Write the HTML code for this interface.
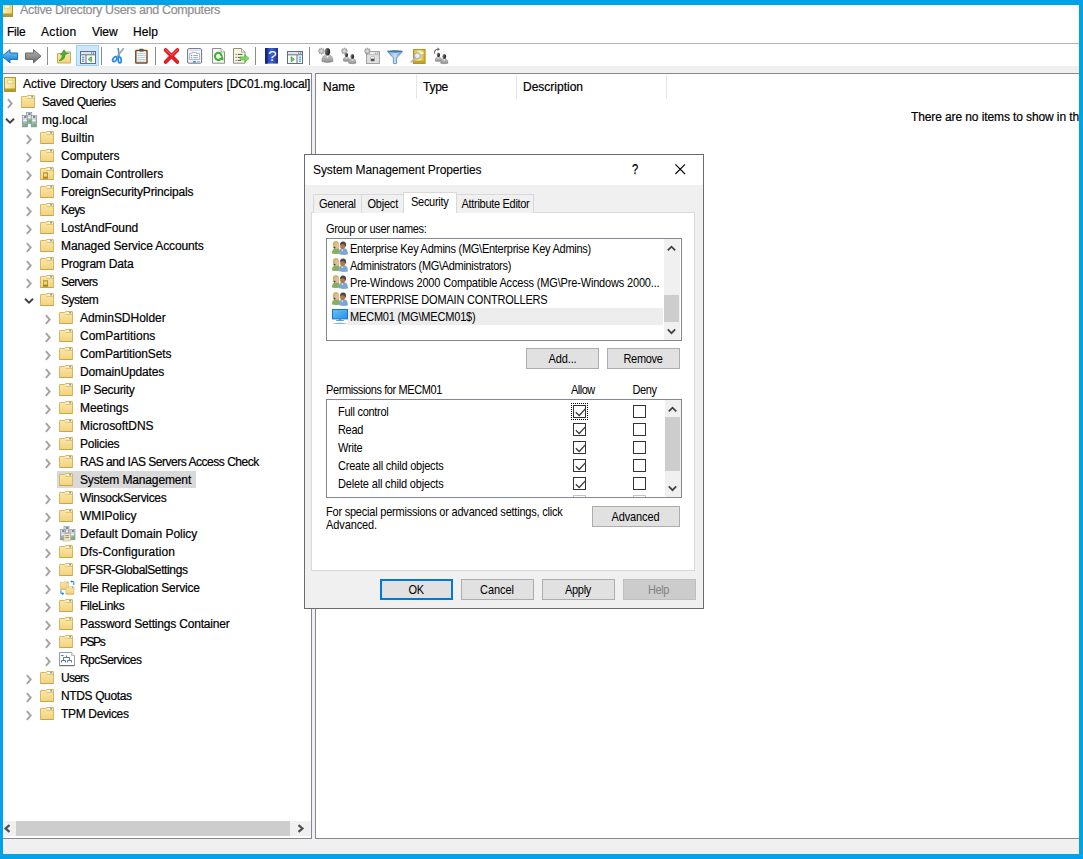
<!DOCTYPE html>
<html><head><meta charset="utf-8"><title>Active Directory Users and Computers</title>
<style>
html,body{margin:0;padding:0}
body{width:1083px;height:859px;overflow:hidden;background:#00a2e8;font-family:'Liberation Sans', sans-serif;}
#win{position:absolute;left:0;top:0;width:1083px;height:859px;overflow:hidden}
#win:before{content:"";position:absolute;left:3px;top:5px;width:1076px;height:849px;background:#fff}
.t{position:absolute;white-space:pre;font-family:'Liberation Sans', sans-serif}
.s{-webkit-text-stroke:0.2px currentColor}
.hl{position:absolute;height:1px}
.vl{position:absolute;width:1px}
.pane{position:absolute;box-sizing:border-box;background:#fff;border:1px solid #828790}
.btn{position:absolute;box-sizing:border-box;background:#e1e1e1;border:1px solid #adadad}
.cb{position:absolute;box-sizing:border-box;width:13px;height:13px;border:1px solid #333;background:#fff}
svg{position:absolute;overflow:visible}
</style></head>
<body>
<svg width="0" height="0" style="position:absolute"><defs>
<linearGradient id="gF" x1="0" y1="0" x2="0" y2="1"><stop offset="0" stop-color="#fbe9ad"/><stop offset="1" stop-color="#f2d27c"/></linearGradient>
<linearGradient id="gB" x1="0" y1="0" x2="1" y2="0"><stop offset="0" stop-color="#fbf6c8"/><stop offset="1" stop-color="#e8d676"/></linearGradient>
<linearGradient id="gS" x1="0" y1="0" x2="0" y2="1"><stop offset="0" stop-color="#d3dbe1"/><stop offset="1" stop-color="#8e9aa6"/></linearGradient>
<linearGradient id="gM" x1="0" y1="0" x2="1" y2="1"><stop offset="0" stop-color="#6cc2f7"/><stop offset="1" stop-color="#2391e6"/></linearGradient>
<linearGradient id="gBlue" x1="0" y1="0" x2="0" y2="1"><stop offset="0" stop-color="#7ec8f5"/><stop offset="1" stop-color="#1079d0"/></linearGradient>
<linearGradient id="gGray" x1="0" y1="0" x2="0" y2="1"><stop offset="0" stop-color="#b5b5b5"/><stop offset="1" stop-color="#6d6d6d"/></linearGradient>
<linearGradient id="gHelp" x1="0" y1="0" x2="1" y2="0"><stop offset="0" stop-color="#1a2f8f"/><stop offset="0.5" stop-color="#3d62d8"/><stop offset="1" stop-color="#1a2f8f"/></linearGradient>
<linearGradient id="gPerson" x1="0" y1="0" x2="0" y2="1"><stop offset="0" stop-color="#5a5a5a"/><stop offset="1" stop-color="#b8b8b8"/></linearGradient>
<linearGradient id="gFun" x1="0" y1="0" x2="1" y2="0"><stop offset="0" stop-color="#6ba5d6"/><stop offset="0.5" stop-color="#c4def2"/><stop offset="1" stop-color="#5b94c8"/></linearGradient>
<linearGradient id="gGold" x1="0" y1="0" x2="1" y2="0"><stop offset="0" stop-color="#d6b43a"/><stop offset="0.5" stop-color="#f6e693"/><stop offset="1" stop-color="#c9a52c"/></linearGradient>
<linearGradient id="gBody" x1="0" y1="0" x2="0" y2="1"><stop offset="0" stop-color="#c9c9c9"/><stop offset="1" stop-color="#8c8c8c"/></linearGradient>
<linearGradient id="gHead" x1="0" y1="0" x2="1" y2="0.3"><stop offset="0" stop-color="#a0a0a0"/><stop offset="0.65" stop-color="#3c3c3c"/><stop offset="1" stop-color="#2a2a2a"/></linearGradient>
</defs></svg>
<div id="win">
<svg style="left:1px;top:2px" width="13" height="15" viewBox="0 0 13 15"><rect x="0.5" y="0.5" width="11" height="14" fill="url(#gB)" stroke="#b3922d"/><rect x="1" y="11.5" width="10" height="2.5" fill="#b39a31"/><rect x="3.2" y="3.2" width="5.6" height="3" fill="#fffbd8" stroke="#dcc66a" stroke-width="0.8"/></svg>
<span class="t s" style="left:20px;top:2.25px;font-size:12.5px;line-height:16.5px;letter-spacing:-0.349px;color:#8f8f8f;">Active Directory Users and Computers</span>
<span class="t s" style="left:7px;top:23.5px;font-size:12px;line-height:16px;letter-spacing:-0.211px;color:#000;">File</span>
<span class="t s" style="left:41px;top:23.5px;font-size:12px;line-height:16px;letter-spacing:0.357px;color:#000;">Action</span>
<span class="t s" style="left:92px;top:23.5px;font-size:12px;line-height:16px;letter-spacing:-0.074px;color:#000;">View</span>
<span class="t s" style="left:133px;top:23.5px;font-size:12px;line-height:16px;letter-spacing:0.078px;color:#000;">Help</span>
<div class="hl" style="left:3px;top:43px;width:1076px;background:#b2b2b2"></div>
<div id="tb"></div>
<div class="vl" style="left:47px;top:47px;height:18px;background:#8d8d8d"></div>
<div class="vl" style="left:101px;top:47px;height:18px;background:#8d8d8d"></div>
<div class="vl" style="left:155px;top:47px;height:18px;background:#8d8d8d"></div>
<div class="vl" style="left:255px;top:47px;height:18px;background:#8d8d8d"></div>
<div class="vl" style="left:309px;top:47px;height:18px;background:#8d8d8d"></div>
<svg style="left:3px;top:49px" width="16" height="15" viewBox="0 0 16 15"><path d="M-1 7.2 L7 0.6 V4 H14.6 V10.4 H7 V13.8 Z" fill="url(#gBlue)" stroke="#0b62b3" stroke-width="0.9"/></svg>
<svg style="left:25px;top:49px" width="17" height="15" viewBox="0 0 17 15"><path d="M16 7.2 L8.6 0.6 V4 H0.6 V10.4 H8.6 V13.8 Z" fill="url(#gGray)" stroke="#5a5a5a" stroke-width="0.9"/></svg>
<svg style="left:57px;top:49px" width="15" height="15" viewBox="0 0 15 15"><path d="M0.5 4.5 H8 L9.5 3 H13.5 V14 H0.5 Z" fill="url(#gF)" stroke="#cfa94f"/><rect x="9.8" y="3.8" width="2.6" height="1" fill="#4a90e2"/><path d="M2 11.6 Q5.2 10.2 5.6 5.6 L3.6 6 L7 0.8 L10.2 5 L8.2 5.2 Q8 11.4 2 11.6Z" fill="#45b52c" stroke="#2b8a1c" stroke-width="0.6"/></svg>
<div style="position:absolute;box-sizing:border-box;left:76px;top:45px;width:23px;height:21px;background:#cce8ff;border:1px solid #99d1ff"></div>
<svg style="left:80px;top:51px" width="16" height="13" viewBox="0 0 16 13"><rect x="0.5" y="0.5" width="15" height="12" fill="#fdfdfd" stroke="#5f6f87"/><rect x="1" y="1" width="14" height="2.4" fill="#dfe3ea"/><path d="M0.5 3.8 H15.5 M6 4 V12.5" stroke="#5f6f87" stroke-width="1"/><rect x="11" y="1.5" width="1.2" height="1.2" fill="#5f6f87"/><rect x="13" y="1.5" width="1.2" height="1.2" fill="#5f6f87"/><path d="M2 6.2 H4.4 M2 8.2 H4.4 M2 10.2 H4.4" stroke="#2f7bd9" stroke-width="1"/><path d="M11.4 5.8 V10.8 L8.2 8.3 Z" fill="#7ad06a" stroke="#35a32a" stroke-width="0.8"/></svg>
<svg style="left:112px;top:47px" width="13" height="17" viewBox="0 0 13 17"><path d="M6.2 1 L7.3 11" stroke="#6f88a3" stroke-width="1.6" fill="none"/><path d="M11.7 1.2 L3.8 11.2" stroke="#8ea3b8" stroke-width="1.6" fill="none"/><ellipse cx="2.8" cy="12.2" rx="1.7" ry="2.7" fill="#fff" stroke="#1e88e5" stroke-width="1.7" transform="rotate(38 2.8 12.2)"/><ellipse cx="7.7" cy="13" rx="1.5" ry="2.9" fill="#fff" stroke="#1e88e5" stroke-width="1.7" transform="rotate(-6 7.7 13)"/></svg>
<svg style="left:135px;top:48px" width="13" height="16" viewBox="0 0 13 16"><rect x="0.8" y="2.6" width="11.2" height="12.4" rx="0.6" fill="#fff" stroke="#7b4a1e" stroke-width="1.5"/><path d="M2.2 5.4 H10.6 M2.2 7.4 H10.6 M2.2 9.4 H10.6 M2.2 11.4 H10.6 M2.2 13.2 H10.6" stroke="#a6c3df" stroke-width="0.9"/><rect x="4.2" y="0.8" width="4.4" height="2.6" rx="0.6" fill="#5e5148"/></svg>
<svg style="left:163px;top:48px" width="17" height="16" viewBox="0 0 17 16"><path d="M2.6 2 L14.4 14 M14.4 2 L2.6 14" stroke="#c40d12" stroke-width="3.7" stroke-linecap="round" fill="none"/><path d="M2.6 2 L14.4 14 M14.4 2 L2.6 14" stroke="#ec1c24" stroke-width="2.6" stroke-linecap="round" fill="none"/><path d="M2.8 1.8 L8.5 7.4 L14.2 1.8" stroke="#f46a6e" stroke-width="1" stroke-linecap="round" fill="none"/></svg>
<svg style="left:187px;top:48px" width="16" height="16" viewBox="0 0 16 16"><rect x="0.6" y="0.6" width="14" height="14.6" rx="1.2" fill="#f6f7f9" stroke="#6a7486"/><rect x="1.2" y="1.2" width="12.8" height="1.8" fill="#dfe4ec"/><path d="M2.6 11.6 V5.6 H5 V4.4 H9.5 V5.6 H12.6 V11.6 Z" fill="#fff" stroke="#9aa6b8" stroke-width="0.8"/><rect x="4" y="7" width="1.2" height="1.2" fill="#2f9bf0"/><path d="M6.2 7.6 H11" stroke="#8d97a8" stroke-width="0.9"/><rect x="4" y="9.2" width="1.2" height="1.2" fill="#8d97a8"/><path d="M6.2 9.8 H11" stroke="#8d97a8" stroke-width="0.9"/><rect x="6" y="13" width="3" height="1.6" fill="#25a3ea"/><rect x="10" y="13" width="3" height="1.6" fill="#b8bec8"/></svg>
<svg style="left:212px;top:48px" width="14" height="16" viewBox="0 0 14 16"><path d="M0.5 0.5 H9 L12.5 4 V15.2 H0.5 Z" fill="#fbfbf9" stroke="#8c8c8c"/><path d="M9 0.5 V4 H12.5" fill="#fff" stroke="#8c8c8c" stroke-width="0.8"/><path d="M9.6 8.6 A3.3 3.6 0 1 0 8.2 11.3" fill="none" stroke="#35b32a" stroke-width="2.1"/><path d="M6.6 11.2 L11.6 12.6 L11 8 Z" fill="#35b32a"/></svg>
<svg style="left:233px;top:48px" width="17" height="16" viewBox="0 0 17 16"><path d="M0.5 0.5 H8.5 L12 4 V15.2 H0.5 Z" fill="#fbf6d8" stroke="#8c8c8c"/><path d="M8.5 0.5 V4 H12" fill="#fffdf0" stroke="#8c8c8c" stroke-width="0.8"/><path d="M2.6 6.4 H3.6 M4.8 6.4 H9.4 M2.6 9.4 H3.6 M4.8 9.4 H8 M2.6 12.4 H3.6 M4.8 12.4 H8" stroke="#4b4b8a" stroke-width="1"/><path d="M7.2 9 H12 V6.8 L16 10.4 L12 14 V11.8 H7.2 Z" fill="#7bdc5c" stroke="#45b52c" stroke-width="0.7"/></svg>
<svg style="left:265px;top:48px" width="13" height="16" viewBox="0 0 13 16"><rect x="0" y="0" width="13" height="15.6" fill="url(#gHelp)"/><rect x="0" y="0" width="2.6" height="15.6" fill="#16277e"/><text x="7.4" y="13.4" text-anchor="middle" font-family="Liberation Sans, sans-serif" font-size="15.5" fill="#fff">?</text></svg>
<svg style="left:287px;top:51px" width="16" height="13" viewBox="0 0 16 13"><rect x="0.5" y="0.5" width="15" height="12" fill="#fdfdfd" stroke="#5f6f87"/><rect x="1" y="1" width="14" height="2.4" fill="#dfe3ea"/><path d="M0.5 3.8 H15.5 M10 4 V12.5" stroke="#5f6f87" stroke-width="1"/><rect x="11" y="1.5" width="1.2" height="1.2" fill="#5f6f87"/><rect x="13" y="1.5" width="1.2" height="1.2" fill="#5f6f87"/><path d="M11.8 6.2 H14 M11.8 8.2 H14 M11.8 10.2 H14" stroke="#2f7bd9" stroke-width="1"/><path d="M4.2 5.8 V10.8 L7.4 8.3 Z" fill="#7ad06a" stroke="#35a32a" stroke-width="0.8"/></svg>
<svg style="left:318px;top:48px" width="16" height="16" viewBox="0 0 16 16"><g transform="translate(9.4 6) scale(1)"><path d="M-5.5 7.6 Q-5.9 2.2 -2 1.2 Q0 3 2 1.2 Q5.9 2.2 5.5 7.6 Q0 9.6 -5.5 7.6 Z" fill="url(#gBody)" stroke="#7a7a7a" stroke-width="0.5"/><path d="M-1.1 2 L0 4.6 L1.1 2 Z" fill="#f2f2f2"/><ellipse cx="0" cy="-2.2" rx="2.8" ry="3.7" fill="url(#gHead)"/></g><polygon points="6.70,3.10 5.29,3.88 5.73,5.43 4.18,4.99 3.40,6.40 2.62,4.99 1.07,5.43 1.51,3.88 0.10,3.10 1.51,2.32 1.07,0.77 2.62,1.21 3.40,-0.20 4.18,1.21 5.73,0.77 5.29,2.32" fill="#c4c4c4" stroke="#8a8a8a" stroke-width="0.6"/><circle cx="3.4" cy="3.1" r="1.155" fill="#dcdcdc"/></svg>
<svg style="left:341px;top:48px" width="16" height="16" viewBox="0 0 16 16"><g transform="translate(5.4 8.4) scale(0.6)"><path d="M-5.5 7.6 Q-5.9 2.2 -2 1.2 Q0 3 2 1.2 Q5.9 2.2 5.5 7.6 Q0 9.6 -5.5 7.6 Z" fill="url(#gBody)" stroke="#7a7a7a" stroke-width="0.5"/><path d="M-1.1 2 L0 4.6 L1.1 2 Z" fill="#f2f2f2"/><ellipse cx="0" cy="-2.2" rx="2.8" ry="3.7" fill="url(#gHead)"/></g><g transform="translate(11.3 10) scale(0.68)"><path d="M-5.5 7.6 Q-5.9 2.2 -2 1.2 Q0 3 2 1.2 Q5.9 2.2 5.5 7.6 Q0 9.6 -5.5 7.6 Z" fill="url(#gBody)" stroke="#7a7a7a" stroke-width="0.5"/><path d="M-1.1 2 L0 4.6 L1.1 2 Z" fill="#f2f2f2"/><ellipse cx="0" cy="-2.2" rx="2.8" ry="3.7" fill="url(#gHead)"/></g><polygon points="6.70,3.10 5.29,3.88 5.73,5.43 4.18,4.99 3.40,6.40 2.62,4.99 1.07,5.43 1.51,3.88 0.10,3.10 1.51,2.32 1.07,0.77 2.62,1.21 3.40,-0.20 4.18,1.21 5.73,0.77 5.29,2.32" fill="#c4c4c4" stroke="#8a8a8a" stroke-width="0.6"/><circle cx="3.4" cy="3.1" r="1.155" fill="#dcdcdc"/></svg>
<svg style="left:364px;top:48px" width="16" height="16" viewBox="0 0 16 16"><rect x="2.5" y="3.5" width="13" height="12" fill="#dedede" stroke="#a2a2a2"/><rect x="3" y="4" width="12" height="2.2" fill="#ededed"/><path d="M3 6.6 H15" stroke="#b4b4b4" stroke-width="0.8"/><rect x="11" y="4.6" width="1.4" height="1" fill="#888"/><rect x="13" y="4.6" width="1.4" height="1" fill="#888"/><rect x="6.2" y="8.2" width="4.8" height="5.6" fill="#555" stroke="#f4f4f4" stroke-width="0.8"/><rect x="7" y="9" width="3.2" height="1.6" fill="#fff"/><polygon points="6.70,3.10 5.29,3.88 5.73,5.43 4.18,4.99 3.40,6.40 2.62,4.99 1.07,5.43 1.51,3.88 0.10,3.10 1.51,2.32 1.07,0.77 2.62,1.21 3.40,-0.20 4.18,1.21 5.73,0.77 5.29,2.32" fill="#c4c4c4" stroke="#8a8a8a" stroke-width="0.6"/><circle cx="3.4" cy="3.1" r="1.155" fill="#dcdcdc"/></svg>
<svg style="left:387px;top:50px" width="16" height="14" viewBox="0 0 16 14"><path d="M0.6 1.6 H15.4 L9.6 8 V13.4 Q8 14 6.4 13.4 V8 Z" fill="url(#gFun)" stroke="#4f86b8" stroke-width="0.8"/><path d="M0.6 1.2 Q8 -0.4 15.4 1.2 Q8 3.4 0.6 1.2Z" fill="#3f78ad" stroke="#3a6fa0" stroke-width="0.6"/></svg>
<svg style="left:410px;top:49px" width="16" height="15" viewBox="0 0 16 15"><rect x="3.5" y="0.5" width="11.6" height="14" fill="url(#gGold)" stroke="#b39420"/><rect x="4" y="11.8" width="10.6" height="2.2" fill="#c2a22b"/><rect x="9" y="2.6" width="4.4" height="2.6" fill="#fbf3c0"/><circle cx="7.4" cy="6.8" r="2.9" fill="#e4f0fb" stroke="#9aa7b5" stroke-width="1"/><path d="M5.2 9 L0.8 13.4" stroke="#b9b9b9" stroke-width="1.8"/></svg>
<svg style="left:433px;top:48px" width="16" height="16" viewBox="0 0 16 16"><g transform="translate(5.4 8.4) scale(0.6)"><path d="M-5.5 7.6 Q-5.9 2.2 -2 1.2 Q0 3 2 1.2 Q5.9 2.2 5.5 7.6 Q0 9.6 -5.5 7.6 Z" fill="url(#gBody)" stroke="#7a7a7a" stroke-width="0.5"/><path d="M-1.1 2 L0 4.6 L1.1 2 Z" fill="#f2f2f2"/><ellipse cx="0" cy="-2.2" rx="2.8" ry="3.7" fill="url(#gHead)"/></g><g transform="translate(11.3 10) scale(0.68)"><path d="M-5.5 7.6 Q-5.9 2.2 -2 1.2 Q0 3 2 1.2 Q5.9 2.2 5.5 7.6 Q0 9.6 -5.5 7.6 Z" fill="url(#gBody)" stroke="#7a7a7a" stroke-width="0.5"/><path d="M-1.1 2 L0 4.6 L1.1 2 Z" fill="#f2f2f2"/><ellipse cx="0" cy="-2.2" rx="2.8" ry="3.7" fill="url(#gHead)"/></g><path d="M1.6 5.6 Q1 1.4 5 1.2" fill="none" stroke="#6a6a6a" stroke-width="1.1"/><path d="M4.4 -0.6 L7 1.2 L4.4 3 Z" fill="#6a6a6a"/></svg>
<div style="position:absolute;left:3px;top:66px;width:1076px;height:788px;background:#f0f0f0"></div>
<div class="pane" style="left:3px;top:73px;width:309px;height:766px;border-left:none"></div>
<div class="pane" style="left:315px;top:73px;width:765px;height:766px;border-right:none"></div>
<span class="t s" style="left:323px;top:78.5px;font-size:12px;line-height:16px;letter-spacing:-0.004px;color:#000;">Name</span>
<span class="t s" style="left:423px;top:78.5px;font-size:12px;line-height:16px;letter-spacing:-0.254px;color:#000;">Type</span>
<span class="t s" style="left:523px;top:78.5px;font-size:12px;line-height:16px;letter-spacing:-0.003px;color:#000;">Description</span>
<div class="vl" style="left:416px;top:75px;height:24px;background:#e5e5e5"></div>
<div class="vl" style="left:516px;top:75px;height:24px;background:#e5e5e5"></div>
<div class="vl" style="left:666px;top:75px;height:24px;background:#e5e5e5"></div>
<span class="t s" style="left:911px;top:108.5px;font-size:12px;line-height:16px;letter-spacing:-0.107px;color:#000;">There are no items to show in th</span>
<svg style="left:4px;top:77px" width="13" height="15" viewBox="0 0 13 15"><rect x="0.5" y="0.5" width="11" height="14" fill="url(#gB)" stroke="#b3922d"/><rect x="1" y="11.5" width="10" height="2.5" fill="#b39a31"/><rect x="3.2" y="3.2" width="5.6" height="3" fill="#fffbd8" stroke="#dcc66a" stroke-width="0.8"/></svg>
<span class="t s" style="left:23px;top:75.5px;font-size:12px;line-height:16px;letter-spacing:0.052px;color:#000;">Active</span> <span class="t s" style="left:60.2px;top:75.5px;font-size:12px;line-height:16px;letter-spacing:-0.213px;color:#000;">Directory</span> <span class="t s" style="left:110.5px;top:75.5px;font-size:12px;line-height:16px;letter-spacing:-0.769px;color:#000;">Users</span> <span class="t s" style="left:141.2px;top:75.5px;font-size:12px;line-height:16px;letter-spacing:-0.277px;color:#000;">and</span> <span class="t s" style="left:164.2px;top:75.5px;font-size:12px;line-height:16px;letter-spacing:-0.010px;color:#000;">Computers</span> <span class="t s" style="left:226.6px;top:75.5px;font-size:12px;line-height:16px;letter-spacing:-0.112px;color:#000;">[DC01.mg.local]</span>
<svg style="left:7px;top:97.5px" width="7" height="11" viewBox="0 0 7 11"><path d="M0.9 1.2 L4.7 5.5 L0.9 9.8" fill="none" stroke="#a3a3a3" stroke-width="1.9"/></svg>
<svg style="left:21px;top:95px" width="14" height="13" viewBox="0 0 14 13"><g transform="translate(0 0) scale(1)"><path d="M0.5 2 Q0.5 1.5 1 1.5 H5.6 L7 0.5 H13 Q13.5 0.5 13.5 1 V12.5 H0.5 Z" fill="url(#gF)" stroke="#d9b65f" stroke-width="1"/><path d="M6.3 3.5 H13" stroke="#e6c571" stroke-width="1" fill="none"/><path d="M0.5 12.5 H13.5" stroke="#c9a44f" stroke-width="1"/><rect x="7.6" y="1.2" width="3" height="1.1" fill="#fff"/><rect x="10.2" y="1.2" width="1.8" height="1.1" fill="#3f8be6"/></g></svg>
<span class="t s" style="left:42px;top:93.5px;font-size:12px;line-height:16px;letter-spacing:-0.453px;color:#000;">Saved Queries</span>
<svg style="left:4.7px;top:117.5px" width="11" height="7" viewBox="0 0 11 7"><path d="M1 0.8 L5 4.6 L9 0.8" fill="none" stroke="#404040" stroke-width="1.9"/></svg>
<svg style="left:22px;top:112px" width="16" height="16" viewBox="0 0 16 16"><g transform="translate(4.4 0.3)"><rect x="0" y="0" width="5.4" height="11" fill="url(#gS)" stroke="#7d8894" stroke-width="0.6"/><rect x="0.6" y="0.6" width="4.2" height="2.6" fill="#dfe7ec"/><rect x="1.8" y="1.2" width="2.4" height="1" fill="#1d2a33"/><rect x="1" y="4.2" width="3.4" height="1.8" fill="#f4f7f9"/><rect x="2.6" y="8" width="2" height="2" fill="#3fdc1e"/></g><g transform="translate(0.3 3.3)"><rect x="0" y="0" width="5.4" height="11.6" fill="url(#gS)" stroke="#7d8894" stroke-width="0.6"/><rect x="0.6" y="0.6" width="4.2" height="2.6" fill="#dfe7ec"/><rect x="1.8" y="1.2" width="2.4" height="1" fill="#1d2a33"/><rect x="1" y="4.2" width="3.4" height="1.8" fill="#f4f7f9"/><rect x="2.6" y="8.6" width="2" height="2" fill="#3fdc1e"/></g><g transform="translate(9.2 3.3)"><rect x="0" y="0" width="5.4" height="11.6" fill="url(#gS)" stroke="#7d8894" stroke-width="0.6"/><rect x="0.6" y="0.6" width="4.2" height="2.6" fill="#dfe7ec"/><rect x="1.8" y="1.2" width="2.4" height="1" fill="#1d2a33"/><rect x="1" y="4.2" width="3.4" height="1.8" fill="#f4f7f9"/><rect x="2.6" y="8.6" width="2" height="2" fill="#3fdc1e"/></g></svg>
<span class="t s" style="left:42px;top:111.5px;font-size:12px;line-height:16px;letter-spacing:0.102px;color:#000;">mg.local</span>
<svg style="left:26px;top:133.5px" width="7" height="11" viewBox="0 0 7 11"><path d="M0.9 1.2 L4.7 5.5 L0.9 9.8" fill="none" stroke="#a3a3a3" stroke-width="1.9"/></svg>
<svg style="left:40px;top:131px" width="14" height="13" viewBox="0 0 14 13"><g transform="translate(0 0) scale(1)"><path d="M0.5 2 Q0.5 1.5 1 1.5 H5.6 L7 0.5 H13 Q13.5 0.5 13.5 1 V12.5 H0.5 Z" fill="url(#gF)" stroke="#d9b65f" stroke-width="1"/><path d="M6.3 3.5 H13" stroke="#e6c571" stroke-width="1" fill="none"/><path d="M0.5 12.5 H13.5" stroke="#c9a44f" stroke-width="1"/><rect x="7.6" y="1.2" width="3" height="1.1" fill="#fff"/><rect x="10.2" y="1.2" width="1.8" height="1.1" fill="#3f8be6"/></g></svg>
<span class="t s" style="left:61px;top:129.5px;font-size:12px;line-height:16px;letter-spacing:0.102px;color:#000;">Builtin</span>
<svg style="left:26px;top:151.5px" width="7" height="11" viewBox="0 0 7 11"><path d="M0.9 1.2 L4.7 5.5 L0.9 9.8" fill="none" stroke="#a3a3a3" stroke-width="1.9"/></svg>
<svg style="left:40px;top:149px" width="14" height="13" viewBox="0 0 14 13"><g transform="translate(0 0) scale(1)"><path d="M0.5 2 Q0.5 1.5 1 1.5 H5.6 L7 0.5 H13 Q13.5 0.5 13.5 1 V12.5 H0.5 Z" fill="url(#gF)" stroke="#d9b65f" stroke-width="1"/><path d="M6.3 3.5 H13" stroke="#e6c571" stroke-width="1" fill="none"/><path d="M0.5 12.5 H13.5" stroke="#c9a44f" stroke-width="1"/><rect x="7.6" y="1.2" width="3" height="1.1" fill="#fff"/><rect x="10.2" y="1.2" width="1.8" height="1.1" fill="#3f8be6"/></g></svg>
<span class="t s" style="left:61px;top:147.5px;font-size:12px;line-height:16px;letter-spacing:-0.021px;color:#000;">Computers</span>
<svg style="left:26px;top:169.5px" width="7" height="11" viewBox="0 0 7 11"><path d="M0.9 1.2 L4.7 5.5 L0.9 9.8" fill="none" stroke="#a3a3a3" stroke-width="1.9"/></svg>
<svg style="left:40px;top:167px" width="14" height="13" viewBox="0 0 14 13"><g transform="translate(0 0) scale(1)"><path d="M0.5 2 Q0.5 1.5 1 1.5 H5.6 L7 0.5 H13 Q13.5 0.5 13.5 1 V12.5 H0.5 Z" fill="url(#gF)" stroke="#d9b65f" stroke-width="1"/><path d="M6.3 3.5 H13" stroke="#e6c571" stroke-width="1" fill="none"/><path d="M0.5 12.5 H13.5" stroke="#c9a44f" stroke-width="1"/><rect x="7.6" y="1.2" width="3" height="1.1" fill="#fff"/><rect x="10.2" y="1.2" width="1.8" height="1.1" fill="#3f8be6"/></g><rect x="3" y="5.2" width="5" height="6.3" fill="#b8962c"/><rect x="3.8" y="6.5" width="3.2" height="3" fill="#e9d98c"/><rect x="3" y="10" width="5" height="1.5" fill="#a9851c"/></svg>
<span class="t s" style="left:61px;top:165.5px;font-size:12px;line-height:16px;letter-spacing:-0.028px;color:#000;">Domain Controllers</span>
<svg style="left:26px;top:187.5px" width="7" height="11" viewBox="0 0 7 11"><path d="M0.9 1.2 L4.7 5.5 L0.9 9.8" fill="none" stroke="#a3a3a3" stroke-width="1.9"/></svg>
<svg style="left:40px;top:185px" width="14" height="13" viewBox="0 0 14 13"><g transform="translate(0 0) scale(1)"><path d="M0.5 2 Q0.5 1.5 1 1.5 H5.6 L7 0.5 H13 Q13.5 0.5 13.5 1 V12.5 H0.5 Z" fill="url(#gF)" stroke="#d9b65f" stroke-width="1"/><path d="M6.3 3.5 H13" stroke="#e6c571" stroke-width="1" fill="none"/><path d="M0.5 12.5 H13.5" stroke="#c9a44f" stroke-width="1"/><rect x="7.6" y="1.2" width="3" height="1.1" fill="#fff"/><rect x="10.2" y="1.2" width="1.8" height="1.1" fill="#3f8be6"/></g></svg>
<span class="t s" style="left:61px;top:183.5px;font-size:12px;line-height:16px;letter-spacing:-0.146px;color:#000;">ForeignSecurityPrincipals</span>
<svg style="left:26px;top:205.5px" width="7" height="11" viewBox="0 0 7 11"><path d="M0.9 1.2 L4.7 5.5 L0.9 9.8" fill="none" stroke="#a3a3a3" stroke-width="1.9"/></svg>
<svg style="left:40px;top:203px" width="14" height="13" viewBox="0 0 14 13"><g transform="translate(0 0) scale(1)"><path d="M0.5 2 Q0.5 1.5 1 1.5 H5.6 L7 0.5 H13 Q13.5 0.5 13.5 1 V12.5 H0.5 Z" fill="url(#gF)" stroke="#d9b65f" stroke-width="1"/><path d="M6.3 3.5 H13" stroke="#e6c571" stroke-width="1" fill="none"/><path d="M0.5 12.5 H13.5" stroke="#c9a44f" stroke-width="1"/><rect x="7.6" y="1.2" width="3" height="1.1" fill="#fff"/><rect x="10.2" y="1.2" width="1.8" height="1.1" fill="#3f8be6"/></g></svg>
<span class="t s" style="left:61px;top:201.5px;font-size:12px;line-height:16px;letter-spacing:-0.772px;color:#000;">Keys</span>
<svg style="left:26px;top:223.5px" width="7" height="11" viewBox="0 0 7 11"><path d="M0.9 1.2 L4.7 5.5 L0.9 9.8" fill="none" stroke="#a3a3a3" stroke-width="1.9"/></svg>
<svg style="left:40px;top:221px" width="14" height="13" viewBox="0 0 14 13"><g transform="translate(0 0) scale(1)"><path d="M0.5 2 Q0.5 1.5 1 1.5 H5.6 L7 0.5 H13 Q13.5 0.5 13.5 1 V12.5 H0.5 Z" fill="url(#gF)" stroke="#d9b65f" stroke-width="1"/><path d="M6.3 3.5 H13" stroke="#e6c571" stroke-width="1" fill="none"/><path d="M0.5 12.5 H13.5" stroke="#c9a44f" stroke-width="1"/><rect x="7.6" y="1.2" width="3" height="1.1" fill="#fff"/><rect x="10.2" y="1.2" width="1.8" height="1.1" fill="#3f8be6"/></g></svg>
<span class="t s" style="left:61px;top:219.5px;font-size:12px;line-height:16px;letter-spacing:-0.080px;color:#000;">LostAndFound</span>
<svg style="left:26px;top:241.5px" width="7" height="11" viewBox="0 0 7 11"><path d="M0.9 1.2 L4.7 5.5 L0.9 9.8" fill="none" stroke="#a3a3a3" stroke-width="1.9"/></svg>
<svg style="left:40px;top:239px" width="14" height="13" viewBox="0 0 14 13"><g transform="translate(0 0) scale(1)"><path d="M0.5 2 Q0.5 1.5 1 1.5 H5.6 L7 0.5 H13 Q13.5 0.5 13.5 1 V12.5 H0.5 Z" fill="url(#gF)" stroke="#d9b65f" stroke-width="1"/><path d="M6.3 3.5 H13" stroke="#e6c571" stroke-width="1" fill="none"/><path d="M0.5 12.5 H13.5" stroke="#c9a44f" stroke-width="1"/><rect x="7.6" y="1.2" width="3" height="1.1" fill="#fff"/><rect x="10.2" y="1.2" width="1.8" height="1.1" fill="#3f8be6"/></g></svg>
<span class="t s" style="left:61px;top:237.5px;font-size:12px;line-height:16px;letter-spacing:-0.113px;color:#000;">Managed Service Accounts</span>
<svg style="left:26px;top:259.5px" width="7" height="11" viewBox="0 0 7 11"><path d="M0.9 1.2 L4.7 5.5 L0.9 9.8" fill="none" stroke="#a3a3a3" stroke-width="1.9"/></svg>
<svg style="left:40px;top:257px" width="14" height="13" viewBox="0 0 14 13"><g transform="translate(0 0) scale(1)"><path d="M0.5 2 Q0.5 1.5 1 1.5 H5.6 L7 0.5 H13 Q13.5 0.5 13.5 1 V12.5 H0.5 Z" fill="url(#gF)" stroke="#d9b65f" stroke-width="1"/><path d="M6.3 3.5 H13" stroke="#e6c571" stroke-width="1" fill="none"/><path d="M0.5 12.5 H13.5" stroke="#c9a44f" stroke-width="1"/><rect x="7.6" y="1.2" width="3" height="1.1" fill="#fff"/><rect x="10.2" y="1.2" width="1.8" height="1.1" fill="#3f8be6"/></g></svg>
<span class="t s" style="left:61px;top:255.5px;font-size:12px;line-height:16px;letter-spacing:-0.192px;color:#000;">Program Data</span>
<svg style="left:26px;top:277.5px" width="7" height="11" viewBox="0 0 7 11"><path d="M0.9 1.2 L4.7 5.5 L0.9 9.8" fill="none" stroke="#a3a3a3" stroke-width="1.9"/></svg>
<svg style="left:40px;top:275px" width="14" height="13" viewBox="0 0 14 13"><g transform="translate(0 0) scale(1)"><path d="M0.5 2 Q0.5 1.5 1 1.5 H5.6 L7 0.5 H13 Q13.5 0.5 13.5 1 V12.5 H0.5 Z" fill="url(#gF)" stroke="#d9b65f" stroke-width="1"/><path d="M6.3 3.5 H13" stroke="#e6c571" stroke-width="1" fill="none"/><path d="M0.5 12.5 H13.5" stroke="#c9a44f" stroke-width="1"/><rect x="7.6" y="1.2" width="3" height="1.1" fill="#fff"/><rect x="10.2" y="1.2" width="1.8" height="1.1" fill="#3f8be6"/></g><rect x="3" y="5.2" width="5" height="6.3" fill="#b8962c"/><rect x="3.8" y="6.5" width="3.2" height="3" fill="#e9d98c"/><rect x="3" y="10" width="5" height="1.5" fill="#a9851c"/></svg>
<span class="t s" style="left:61px;top:273.5px;font-size:12px;line-height:16px;letter-spacing:-0.721px;color:#000;">Servers</span>
<svg style="left:23.7px;top:297.5px" width="11" height="7" viewBox="0 0 11 7"><path d="M1 0.8 L5 4.6 L9 0.8" fill="none" stroke="#404040" stroke-width="1.9"/></svg>
<svg style="left:40px;top:293px" width="14" height="13" viewBox="0 0 14 13"><g transform="translate(0 0) scale(1)"><path d="M0.5 2 Q0.5 1.5 1 1.5 H5.6 L7 0.5 H13 Q13.5 0.5 13.5 1 V12.5 H0.5 Z" fill="url(#gF)" stroke="#d9b65f" stroke-width="1"/><path d="M6.3 3.5 H13" stroke="#e6c571" stroke-width="1" fill="none"/><path d="M0.5 12.5 H13.5" stroke="#c9a44f" stroke-width="1"/><rect x="7.6" y="1.2" width="3" height="1.1" fill="#fff"/><rect x="10.2" y="1.2" width="1.8" height="1.1" fill="#3f8be6"/></g></svg>
<span class="t s" style="left:61px;top:291.5px;font-size:12px;line-height:16px;letter-spacing:-0.469px;color:#000;">System</span>
<svg style="left:45px;top:313.5px" width="7" height="11" viewBox="0 0 7 11"><path d="M0.9 1.2 L4.7 5.5 L0.9 9.8" fill="none" stroke="#a3a3a3" stroke-width="1.9"/></svg>
<svg style="left:59px;top:311px" width="14" height="13" viewBox="0 0 14 13"><g transform="translate(0 0) scale(1)"><path d="M0.5 2 Q0.5 1.5 1 1.5 H5.6 L7 0.5 H13 Q13.5 0.5 13.5 1 V12.5 H0.5 Z" fill="url(#gF)" stroke="#d9b65f" stroke-width="1"/><path d="M6.3 3.5 H13" stroke="#e6c571" stroke-width="1" fill="none"/><path d="M0.5 12.5 H13.5" stroke="#c9a44f" stroke-width="1"/><rect x="7.6" y="1.2" width="3" height="1.1" fill="#fff"/><rect x="10.2" y="1.2" width="1.8" height="1.1" fill="#3f8be6"/></g></svg>
<span class="t s" style="left:80px;top:309.5px;font-size:12px;line-height:16px;letter-spacing:-0.027px;color:#000;">AdminSDHolder</span>
<svg style="left:45px;top:331.5px" width="7" height="11" viewBox="0 0 7 11"><path d="M0.9 1.2 L4.7 5.5 L0.9 9.8" fill="none" stroke="#a3a3a3" stroke-width="1.9"/></svg>
<svg style="left:59px;top:329px" width="14" height="13" viewBox="0 0 14 13"><g transform="translate(0 0) scale(1)"><path d="M0.5 2 Q0.5 1.5 1 1.5 H5.6 L7 0.5 H13 Q13.5 0.5 13.5 1 V12.5 H0.5 Z" fill="url(#gF)" stroke="#d9b65f" stroke-width="1"/><path d="M6.3 3.5 H13" stroke="#e6c571" stroke-width="1" fill="none"/><path d="M0.5 12.5 H13.5" stroke="#c9a44f" stroke-width="1"/><rect x="7.6" y="1.2" width="3" height="1.1" fill="#fff"/><rect x="10.2" y="1.2" width="1.8" height="1.1" fill="#3f8be6"/></g></svg>
<span class="t s" style="left:80px;top:327.5px;font-size:12px;line-height:16px;letter-spacing:-0.005px;color:#000;">ComPartitions</span>
<svg style="left:45px;top:349.5px" width="7" height="11" viewBox="0 0 7 11"><path d="M0.9 1.2 L4.7 5.5 L0.9 9.8" fill="none" stroke="#a3a3a3" stroke-width="1.9"/></svg>
<svg style="left:59px;top:347px" width="14" height="13" viewBox="0 0 14 13"><g transform="translate(0 0) scale(1)"><path d="M0.5 2 Q0.5 1.5 1 1.5 H5.6 L7 0.5 H13 Q13.5 0.5 13.5 1 V12.5 H0.5 Z" fill="url(#gF)" stroke="#d9b65f" stroke-width="1"/><path d="M6.3 3.5 H13" stroke="#e6c571" stroke-width="1" fill="none"/><path d="M0.5 12.5 H13.5" stroke="#c9a44f" stroke-width="1"/><rect x="7.6" y="1.2" width="3" height="1.1" fill="#fff"/><rect x="10.2" y="1.2" width="1.8" height="1.1" fill="#3f8be6"/></g></svg>
<span class="t s" style="left:80px;top:345.5px;font-size:12px;line-height:16px;letter-spacing:-0.130px;color:#000;">ComPartitionSets</span>
<svg style="left:45px;top:367.5px" width="7" height="11" viewBox="0 0 7 11"><path d="M0.9 1.2 L4.7 5.5 L0.9 9.8" fill="none" stroke="#a3a3a3" stroke-width="1.9"/></svg>
<svg style="left:59px;top:365px" width="14" height="13" viewBox="0 0 14 13"><g transform="translate(0 0) scale(1)"><path d="M0.5 2 Q0.5 1.5 1 1.5 H5.6 L7 0.5 H13 Q13.5 0.5 13.5 1 V12.5 H0.5 Z" fill="url(#gF)" stroke="#d9b65f" stroke-width="1"/><path d="M6.3 3.5 H13" stroke="#e6c571" stroke-width="1" fill="none"/><path d="M0.5 12.5 H13.5" stroke="#c9a44f" stroke-width="1"/><rect x="7.6" y="1.2" width="3" height="1.1" fill="#fff"/><rect x="10.2" y="1.2" width="1.8" height="1.1" fill="#3f8be6"/></g></svg>
<span class="t s" style="left:80px;top:363.5px;font-size:12px;line-height:16px;letter-spacing:-0.142px;color:#000;">DomainUpdates</span>
<svg style="left:45px;top:385.5px" width="7" height="11" viewBox="0 0 7 11"><path d="M0.9 1.2 L4.7 5.5 L0.9 9.8" fill="none" stroke="#a3a3a3" stroke-width="1.9"/></svg>
<svg style="left:59px;top:383px" width="14" height="13" viewBox="0 0 14 13"><g transform="translate(0 0) scale(1)"><path d="M0.5 2 Q0.5 1.5 1 1.5 H5.6 L7 0.5 H13 Q13.5 0.5 13.5 1 V12.5 H0.5 Z" fill="url(#gF)" stroke="#d9b65f" stroke-width="1"/><path d="M6.3 3.5 H13" stroke="#e6c571" stroke-width="1" fill="none"/><path d="M0.5 12.5 H13.5" stroke="#c9a44f" stroke-width="1"/><rect x="7.6" y="1.2" width="3" height="1.1" fill="#fff"/><rect x="10.2" y="1.2" width="1.8" height="1.1" fill="#3f8be6"/></g></svg>
<span class="t s" style="left:80px;top:381.5px;font-size:12px;line-height:16px;letter-spacing:-0.310px;color:#000;">IP Security</span>
<svg style="left:45px;top:403.5px" width="7" height="11" viewBox="0 0 7 11"><path d="M0.9 1.2 L4.7 5.5 L0.9 9.8" fill="none" stroke="#a3a3a3" stroke-width="1.9"/></svg>
<svg style="left:59px;top:401px" width="14" height="13" viewBox="0 0 14 13"><g transform="translate(0 0) scale(1)"><path d="M0.5 2 Q0.5 1.5 1 1.5 H5.6 L7 0.5 H13 Q13.5 0.5 13.5 1 V12.5 H0.5 Z" fill="url(#gF)" stroke="#d9b65f" stroke-width="1"/><path d="M6.3 3.5 H13" stroke="#e6c571" stroke-width="1" fill="none"/><path d="M0.5 12.5 H13.5" stroke="#c9a44f" stroke-width="1"/><rect x="7.6" y="1.2" width="3" height="1.1" fill="#fff"/><rect x="10.2" y="1.2" width="1.8" height="1.1" fill="#3f8be6"/></g></svg>
<span class="t s" style="left:80px;top:399.5px;font-size:12px;line-height:16px;letter-spacing:-0.038px;color:#000;">Meetings</span>
<svg style="left:45px;top:421.5px" width="7" height="11" viewBox="0 0 7 11"><path d="M0.9 1.2 L4.7 5.5 L0.9 9.8" fill="none" stroke="#a3a3a3" stroke-width="1.9"/></svg>
<svg style="left:59px;top:419px" width="14" height="13" viewBox="0 0 14 13"><g transform="translate(0 0) scale(1)"><path d="M0.5 2 Q0.5 1.5 1 1.5 H5.6 L7 0.5 H13 Q13.5 0.5 13.5 1 V12.5 H0.5 Z" fill="url(#gF)" stroke="#d9b65f" stroke-width="1"/><path d="M6.3 3.5 H13" stroke="#e6c571" stroke-width="1" fill="none"/><path d="M0.5 12.5 H13.5" stroke="#c9a44f" stroke-width="1"/><rect x="7.6" y="1.2" width="3" height="1.1" fill="#fff"/><rect x="10.2" y="1.2" width="1.8" height="1.1" fill="#3f8be6"/></g></svg>
<span class="t s" style="left:80px;top:417.5px;font-size:12px;line-height:16px;letter-spacing:-0.035px;color:#000;">MicrosoftDNS</span>
<svg style="left:45px;top:439.5px" width="7" height="11" viewBox="0 0 7 11"><path d="M0.9 1.2 L4.7 5.5 L0.9 9.8" fill="none" stroke="#a3a3a3" stroke-width="1.9"/></svg>
<svg style="left:59px;top:437px" width="14" height="13" viewBox="0 0 14 13"><g transform="translate(0 0) scale(1)"><path d="M0.5 2 Q0.5 1.5 1 1.5 H5.6 L7 0.5 H13 Q13.5 0.5 13.5 1 V12.5 H0.5 Z" fill="url(#gF)" stroke="#d9b65f" stroke-width="1"/><path d="M6.3 3.5 H13" stroke="#e6c571" stroke-width="1" fill="none"/><path d="M0.5 12.5 H13.5" stroke="#c9a44f" stroke-width="1"/><rect x="7.6" y="1.2" width="3" height="1.1" fill="#fff"/><rect x="10.2" y="1.2" width="1.8" height="1.1" fill="#3f8be6"/></g></svg>
<span class="t s" style="left:80px;top:435.5px;font-size:12px;line-height:16px;letter-spacing:-0.257px;color:#000;">Policies</span>
<svg style="left:45px;top:457.5px" width="7" height="11" viewBox="0 0 7 11"><path d="M0.9 1.2 L4.7 5.5 L0.9 9.8" fill="none" stroke="#a3a3a3" stroke-width="1.9"/></svg>
<svg style="left:59px;top:455px" width="14" height="13" viewBox="0 0 14 13"><g transform="translate(0 0) scale(1)"><path d="M0.5 2 Q0.5 1.5 1 1.5 H5.6 L7 0.5 H13 Q13.5 0.5 13.5 1 V12.5 H0.5 Z" fill="url(#gF)" stroke="#d9b65f" stroke-width="1"/><path d="M6.3 3.5 H13" stroke="#e6c571" stroke-width="1" fill="none"/><path d="M0.5 12.5 H13.5" stroke="#c9a44f" stroke-width="1"/><rect x="7.6" y="1.2" width="3" height="1.1" fill="#fff"/><rect x="10.2" y="1.2" width="1.8" height="1.1" fill="#3f8be6"/></g></svg>
<span class="t s" style="left:80px;top:453.5px;font-size:12px;line-height:16px;letter-spacing:-0.478px;color:#000;">RAS and IAS Servers Access Check</span>
<div style="position:absolute;left:57px;top:471px;width:139px;height:17px;background:#d9d9d9"></div>
<svg style="left:59px;top:473px" width="14" height="13" viewBox="0 0 14 13"><g transform="translate(0 0) scale(1)"><path d="M0.5 2 Q0.5 1.5 1 1.5 H5.6 L7 0.5 H13 Q13.5 0.5 13.5 1 V12.5 H0.5 Z" fill="url(#gF)" stroke="#d9b65f" stroke-width="1"/><path d="M6.3 3.5 H13" stroke="#e6c571" stroke-width="1" fill="none"/><path d="M0.5 12.5 H13.5" stroke="#c9a44f" stroke-width="1"/><rect x="7.6" y="1.2" width="3" height="1.1" fill="#fff"/><rect x="10.2" y="1.2" width="1.8" height="1.1" fill="#3f8be6"/></g></svg>
<span class="t s" style="left:80px;top:471.5px;font-size:12px;line-height:16px;letter-spacing:-0.135px;color:#000;">System Management</span>
<svg style="left:45px;top:493.5px" width="7" height="11" viewBox="0 0 7 11"><path d="M0.9 1.2 L4.7 5.5 L0.9 9.8" fill="none" stroke="#a3a3a3" stroke-width="1.9"/></svg>
<svg style="left:59px;top:491px" width="14" height="13" viewBox="0 0 14 13"><g transform="translate(0 0) scale(1)"><path d="M0.5 2 Q0.5 1.5 1 1.5 H5.6 L7 0.5 H13 Q13.5 0.5 13.5 1 V12.5 H0.5 Z" fill="url(#gF)" stroke="#d9b65f" stroke-width="1"/><path d="M6.3 3.5 H13" stroke="#e6c571" stroke-width="1" fill="none"/><path d="M0.5 12.5 H13.5" stroke="#c9a44f" stroke-width="1"/><rect x="7.6" y="1.2" width="3" height="1.1" fill="#fff"/><rect x="10.2" y="1.2" width="1.8" height="1.1" fill="#3f8be6"/></g></svg>
<span class="t s" style="left:80px;top:489.5px;font-size:12px;line-height:16px;letter-spacing:-0.337px;color:#000;">WinsockServices</span>
<svg style="left:45px;top:511.5px" width="7" height="11" viewBox="0 0 7 11"><path d="M0.9 1.2 L4.7 5.5 L0.9 9.8" fill="none" stroke="#a3a3a3" stroke-width="1.9"/></svg>
<svg style="left:59px;top:509px" width="14" height="13" viewBox="0 0 14 13"><g transform="translate(0 0) scale(1)"><path d="M0.5 2 Q0.5 1.5 1 1.5 H5.6 L7 0.5 H13 Q13.5 0.5 13.5 1 V12.5 H0.5 Z" fill="url(#gF)" stroke="#d9b65f" stroke-width="1"/><path d="M6.3 3.5 H13" stroke="#e6c571" stroke-width="1" fill="none"/><path d="M0.5 12.5 H13.5" stroke="#c9a44f" stroke-width="1"/><rect x="7.6" y="1.2" width="3" height="1.1" fill="#fff"/><rect x="10.2" y="1.2" width="1.8" height="1.1" fill="#3f8be6"/></g></svg>
<span class="t s" style="left:80px;top:507.5px;font-size:12px;line-height:16px;letter-spacing:-0.030px;color:#000;">WMIPolicy</span>
<svg style="left:45px;top:529.5px" width="7" height="11" viewBox="0 0 7 11"><path d="M0.9 1.2 L4.7 5.5 L0.9 9.8" fill="none" stroke="#a3a3a3" stroke-width="1.9"/></svg>
<svg style="left:60px;top:526px" width="16" height="16" viewBox="0 0 16 16"><g transform="translate(4 0.3)"><rect x="0" y="0" width="5" height="8" fill="url(#gS)" stroke="#7d8894" stroke-width="0.6"/><rect x="0.6" y="0.6" width="3.8" height="2.6" fill="#dfe7ec"/><rect x="1.8" y="1.2" width="2.4" height="1" fill="#1d2a33"/><rect x="1" y="4.2" width="3" height="1.8" fill="#f4f7f9"/></g><g transform="translate(0.3 3.3)"><rect x="0" y="0" width="5" height="10.5" fill="url(#gS)" stroke="#7d8894" stroke-width="0.6"/><rect x="0.6" y="0.6" width="3.8" height="2.6" fill="#dfe7ec"/><rect x="1.8" y="1.2" width="2.4" height="1" fill="#1d2a33"/><rect x="1" y="4.2" width="3" height="1.8" fill="#f4f7f9"/></g><g transform="translate(10 3.3)"><rect x="0" y="0" width="5" height="10.5" fill="url(#gS)" stroke="#7d8894" stroke-width="0.6"/><rect x="0.6" y="0.6" width="3.8" height="2.6" fill="#dfe7ec"/><rect x="1.8" y="1.2" width="2.4" height="1" fill="#1d2a33"/><rect x="1" y="4.2" width="3" height="1.8" fill="#f4f7f9"/><rect x="2.2" y="7.5" width="2" height="2" fill="#3fdc1e"/></g><path d="M4 7.5 H10.6 V13.5 Q10.6 15 9 15 H3.2 Q2.2 15 2.4 14 H4 Z" fill="#f7ecc0" stroke="#c9b47a" stroke-width="0.7"/><path d="M5.2 9.7 H9.2 M5.2 11.7 H9.2" stroke="#7a78b8" stroke-width="0.9"/></svg>
<span class="t s" style="left:80px;top:525.5px;font-size:12px;line-height:16px;letter-spacing:-0.036px;color:#000;">Default Domain Policy</span>
<svg style="left:45px;top:547.5px" width="7" height="11" viewBox="0 0 7 11"><path d="M0.9 1.2 L4.7 5.5 L0.9 9.8" fill="none" stroke="#a3a3a3" stroke-width="1.9"/></svg>
<svg style="left:59px;top:545px" width="14" height="13" viewBox="0 0 14 13"><g transform="translate(0 0) scale(1)"><path d="M0.5 2 Q0.5 1.5 1 1.5 H5.6 L7 0.5 H13 Q13.5 0.5 13.5 1 V12.5 H0.5 Z" fill="url(#gF)" stroke="#d9b65f" stroke-width="1"/><path d="M6.3 3.5 H13" stroke="#e6c571" stroke-width="1" fill="none"/><path d="M0.5 12.5 H13.5" stroke="#c9a44f" stroke-width="1"/><rect x="7.6" y="1.2" width="3" height="1.1" fill="#fff"/><rect x="10.2" y="1.2" width="1.8" height="1.1" fill="#3f8be6"/></g></svg>
<span class="t s" style="left:80px;top:543.5px;font-size:12px;line-height:16px;letter-spacing:0.101px;color:#000;">Dfs-Configuration</span>
<svg style="left:45px;top:565.5px" width="7" height="11" viewBox="0 0 7 11"><path d="M0.9 1.2 L4.7 5.5 L0.9 9.8" fill="none" stroke="#a3a3a3" stroke-width="1.9"/></svg>
<svg style="left:59px;top:563px" width="14" height="13" viewBox="0 0 14 13"><g transform="translate(0 0) scale(1)"><path d="M0.5 2 Q0.5 1.5 1 1.5 H5.6 L7 0.5 H13 Q13.5 0.5 13.5 1 V12.5 H0.5 Z" fill="url(#gF)" stroke="#d9b65f" stroke-width="1"/><path d="M6.3 3.5 H13" stroke="#e6c571" stroke-width="1" fill="none"/><path d="M0.5 12.5 H13.5" stroke="#c9a44f" stroke-width="1"/><rect x="7.6" y="1.2" width="3" height="1.1" fill="#fff"/><rect x="10.2" y="1.2" width="1.8" height="1.1" fill="#3f8be6"/></g></svg>
<span class="t s" style="left:80px;top:561.5px;font-size:12px;line-height:16px;letter-spacing:-0.375px;color:#000;">DFSR-GlobalSettings</span>
<svg style="left:45px;top:583.5px" width="7" height="11" viewBox="0 0 7 11"><path d="M0.9 1.2 L4.7 5.5 L0.9 9.8" fill="none" stroke="#a3a3a3" stroke-width="1.9"/></svg>
<svg style="left:60px;top:580px" width="16" height="16" viewBox="0 0 16 16"><g transform="translate(0.2 1.5) scale(0.62)"><path d="M0.5 2 Q0.5 1.5 1 1.5 H5.6 L7 0.5 H13 Q13.5 0.5 13.5 1 V12.5 H0.5 Z" fill="url(#gF)" stroke="#d9b65f" stroke-width="1"/><path d="M6.3 3.5 H13" stroke="#e6c571" stroke-width="1" fill="none"/><path d="M0.5 12.5 H13.5" stroke="#c9a44f" stroke-width="1"/><rect x="7.6" y="1.2" width="3" height="1.1" fill="#fff"/><rect x="10.2" y="1.2" width="1.8" height="1.1" fill="#3f8be6"/></g><g transform="translate(5.6 6.3) scale(0.62)"><path d="M0.5 2 Q0.5 1.5 1 1.5 H5.6 L7 0.5 H13 Q13.5 0.5 13.5 1 V12.5 H0.5 Z" fill="url(#gF)" stroke="#d9b65f" stroke-width="1"/><path d="M6.3 3.5 H13" stroke="#e6c571" stroke-width="1" fill="none"/><path d="M0.5 12.5 H13.5" stroke="#c9a44f" stroke-width="1"/><rect x="7.6" y="1.2" width="3" height="1.1" fill="#fff"/><rect x="10.2" y="1.2" width="1.8" height="1.1" fill="#3f8be6"/></g><path d="M10.8 1.5 H12.8 Q13.8 1.5 13.8 2.6 V5" fill="none" stroke="#1e88e5" stroke-width="1.1"/><path d="M12.2 0 L10.4 1.5 L12.2 3 Z" fill="#1e88e5"/><path d="M0.9 10.2 V12.4 Q0.9 13.6 2 13.6 H3" fill="none" stroke="#1e88e5" stroke-width="1.1"/><path d="M2.4 12 L4.2 13.6 L2.4 15.2 Z" fill="#1e88e5"/></svg>
<span class="t s" style="left:80px;top:579.5px;font-size:12px;line-height:16px;letter-spacing:-0.241px;color:#000;">File Replication Service</span>
<svg style="left:45px;top:601.5px" width="7" height="11" viewBox="0 0 7 11"><path d="M0.9 1.2 L4.7 5.5 L0.9 9.8" fill="none" stroke="#a3a3a3" stroke-width="1.9"/></svg>
<svg style="left:59px;top:599px" width="14" height="13" viewBox="0 0 14 13"><g transform="translate(0 0) scale(1)"><path d="M0.5 2 Q0.5 1.5 1 1.5 H5.6 L7 0.5 H13 Q13.5 0.5 13.5 1 V12.5 H0.5 Z" fill="url(#gF)" stroke="#d9b65f" stroke-width="1"/><path d="M6.3 3.5 H13" stroke="#e6c571" stroke-width="1" fill="none"/><path d="M0.5 12.5 H13.5" stroke="#c9a44f" stroke-width="1"/><rect x="7.6" y="1.2" width="3" height="1.1" fill="#fff"/><rect x="10.2" y="1.2" width="1.8" height="1.1" fill="#3f8be6"/></g></svg>
<span class="t s" style="left:80px;top:597.5px;font-size:12px;line-height:16px;letter-spacing:-0.340px;color:#000;">FileLinks</span>
<svg style="left:45px;top:619.5px" width="7" height="11" viewBox="0 0 7 11"><path d="M0.9 1.2 L4.7 5.5 L0.9 9.8" fill="none" stroke="#a3a3a3" stroke-width="1.9"/></svg>
<svg style="left:59px;top:617px" width="14" height="13" viewBox="0 0 14 13"><g transform="translate(0 0) scale(1)"><path d="M0.5 2 Q0.5 1.5 1 1.5 H5.6 L7 0.5 H13 Q13.5 0.5 13.5 1 V12.5 H0.5 Z" fill="url(#gF)" stroke="#d9b65f" stroke-width="1"/><path d="M6.3 3.5 H13" stroke="#e6c571" stroke-width="1" fill="none"/><path d="M0.5 12.5 H13.5" stroke="#c9a44f" stroke-width="1"/><rect x="7.6" y="1.2" width="3" height="1.1" fill="#fff"/><rect x="10.2" y="1.2" width="1.8" height="1.1" fill="#3f8be6"/></g></svg>
<span class="t s" style="left:80px;top:615.5px;font-size:12px;line-height:16px;letter-spacing:-0.194px;color:#000;">Password Settings Container</span>
<svg style="left:45px;top:637.5px" width="7" height="11" viewBox="0 0 7 11"><path d="M0.9 1.2 L4.7 5.5 L0.9 9.8" fill="none" stroke="#a3a3a3" stroke-width="1.9"/></svg>
<svg style="left:59px;top:635px" width="14" height="13" viewBox="0 0 14 13"><g transform="translate(0 0) scale(1)"><path d="M0.5 2 Q0.5 1.5 1 1.5 H5.6 L7 0.5 H13 Q13.5 0.5 13.5 1 V12.5 H0.5 Z" fill="url(#gF)" stroke="#d9b65f" stroke-width="1"/><path d="M6.3 3.5 H13" stroke="#e6c571" stroke-width="1" fill="none"/><path d="M0.5 12.5 H13.5" stroke="#c9a44f" stroke-width="1"/><rect x="7.6" y="1.2" width="3" height="1.1" fill="#fff"/><rect x="10.2" y="1.2" width="1.8" height="1.1" fill="#3f8be6"/></g></svg>
<span class="t s" style="left:80px;top:633.5px;font-size:12px;line-height:16px;letter-spacing:-1.454px;color:#000;">PSPs</span>
<svg style="left:45px;top:655.5px" width="7" height="11" viewBox="0 0 7 11"><path d="M0.9 1.2 L4.7 5.5 L0.9 9.8" fill="none" stroke="#a3a3a3" stroke-width="1.9"/></svg>
<svg style="left:59px;top:652px" width="16" height="15" viewBox="0 0 16 15"><path d="M0.5 0.5 H12.5 L15.5 3.5 V13.5 H0.5 Z" fill="#fff" stroke="#9a9a9a"/><path d="M0.5 13.6 H15.5" stroke="#6f6f6f" stroke-width="1.2"/><path d="M12.5 0.5 V3.5 H15.5" fill="#eee" stroke="#b5b5b5" stroke-width="0.8"/><path d="M2 3.5 H4.5 M7.5 3.5 V5.5 M4.5 8 V5.5 H10.5 V8 M2.5 10.5 V8.5 H6.5 V10.5 M8.5 10.5 V8.5 H12.5 V10.5" fill="none" stroke="#5a7ba3" stroke-width="1"/></svg>
<span class="t s" style="left:80px;top:651.5px;font-size:12px;line-height:16px;letter-spacing:-0.542px;color:#000;">RpcServices</span>
<svg style="left:26px;top:673.5px" width="7" height="11" viewBox="0 0 7 11"><path d="M0.9 1.2 L4.7 5.5 L0.9 9.8" fill="none" stroke="#a3a3a3" stroke-width="1.9"/></svg>
<svg style="left:40px;top:671px" width="14" height="13" viewBox="0 0 14 13"><g transform="translate(0 0) scale(1)"><path d="M0.5 2 Q0.5 1.5 1 1.5 H5.6 L7 0.5 H13 Q13.5 0.5 13.5 1 V12.5 H0.5 Z" fill="url(#gF)" stroke="#d9b65f" stroke-width="1"/><path d="M6.3 3.5 H13" stroke="#e6c571" stroke-width="1" fill="none"/><path d="M0.5 12.5 H13.5" stroke="#c9a44f" stroke-width="1"/><rect x="7.6" y="1.2" width="3" height="1.1" fill="#fff"/><rect x="10.2" y="1.2" width="1.8" height="1.1" fill="#3f8be6"/></g></svg>
<span class="t s" style="left:61px;top:669.5px;font-size:12px;line-height:16px;letter-spacing:-0.769px;color:#000;">Users</span>
<svg style="left:26px;top:691.5px" width="7" height="11" viewBox="0 0 7 11"><path d="M0.9 1.2 L4.7 5.5 L0.9 9.8" fill="none" stroke="#a3a3a3" stroke-width="1.9"/></svg>
<svg style="left:40px;top:689px" width="14" height="13" viewBox="0 0 14 13"><g transform="translate(0 0) scale(1)"><path d="M0.5 2 Q0.5 1.5 1 1.5 H5.6 L7 0.5 H13 Q13.5 0.5 13.5 1 V12.5 H0.5 Z" fill="url(#gF)" stroke="#d9b65f" stroke-width="1"/><path d="M6.3 3.5 H13" stroke="#e6c571" stroke-width="1" fill="none"/><path d="M0.5 12.5 H13.5" stroke="#c9a44f" stroke-width="1"/><rect x="7.6" y="1.2" width="3" height="1.1" fill="#fff"/><rect x="10.2" y="1.2" width="1.8" height="1.1" fill="#3f8be6"/></g></svg>
<span class="t s" style="left:61px;top:687.5px;font-size:12px;line-height:16px;letter-spacing:-0.373px;color:#000;">NTDS Quotas</span>
<svg style="left:26px;top:709.5px" width="7" height="11" viewBox="0 0 7 11"><path d="M0.9 1.2 L4.7 5.5 L0.9 9.8" fill="none" stroke="#a3a3a3" stroke-width="1.9"/></svg>
<svg style="left:40px;top:707px" width="14" height="13" viewBox="0 0 14 13"><g transform="translate(0 0) scale(1)"><path d="M0.5 2 Q0.5 1.5 1 1.5 H5.6 L7 0.5 H13 Q13.5 0.5 13.5 1 V12.5 H0.5 Z" fill="url(#gF)" stroke="#d9b65f" stroke-width="1"/><path d="M6.3 3.5 H13" stroke="#e6c571" stroke-width="1" fill="none"/><path d="M0.5 12.5 H13.5" stroke="#c9a44f" stroke-width="1"/><rect x="7.6" y="1.2" width="3" height="1.1" fill="#fff"/><rect x="10.2" y="1.2" width="1.8" height="1.1" fill="#3f8be6"/></g></svg>
<span class="t s" style="left:61px;top:705.5px;font-size:12px;line-height:16px;letter-spacing:-0.340px;color:#000;">TPM Devices</span>
<div style="position:absolute;left:3px;top:821px;width:308px;height:15px;background:#f0f0f0"></div>
<div style="position:absolute;left:16px;top:821px;width:274px;height:15px;background:#cdcdcd"></div>
<svg style="position:absolute;left:3px;top:823px" width="9" height="11"><path d="M6.5 2.2 L2.6 5.5 L6.5 8.8" fill="none" stroke="#4d4d4d" stroke-width="2.2"/></svg>
<svg style="position:absolute;left:296px;top:823px" width="9" height="11"><path d="M2.5 2.2 L6.4 5.5 L2.5 8.8" fill="none" stroke="#4d4d4d" stroke-width="2.2"/></svg>
<div style="position:absolute;left:3px;top:839px;width:1076px;height:15px;background:#f0f0f0"></div>
<div style="position:absolute;box-sizing:border-box;left:304px;top:154px;width:400px;height:455px;background:#f0f0f0;border:1px solid #6b6b6b"></div>
<div style="position:absolute;left:305px;top:155px;width:398px;height:30px;background:#fff"></div>
<span class="t s" style="left:313px;top:161.5px;font-size:12px;line-height:16px;letter-spacing:-0.104px;color:#000;-webkit-text-stroke:0.08px #000;">System Management Properties</span>
<span class="t s" style="left:632.1px;top:160.4px;font-size:14px;line-height:18px;letter-spacing:0.000px;color:#000;-webkit-text-stroke:0.25px #000;transform:scaleX(0.8);transform-origin:0 0;">?</span>
<svg style="left:675px;top:164px" width="11" height="11"><path d="M0.4 0.4 L10 10 M10 0.4 L0.4 10" stroke="#000" stroke-width="1.1" fill="none"/></svg>
<div style="position:absolute;box-sizing:border-box;left:311px;top:212px;width:384px;height:359px;background:#fff;border:1px solid #d9d9d9"></div>
<div style="position:absolute;box-sizing:border-box;left:313px;top:194px;width:49px;height:19px;background:#f0f0f0;border:1px solid #d9d9d9;border-bottom:none"></div>
<span class="t" style="left:319px;top:196.5px;font-size:11px;line-height:15px;letter-spacing:-0.377px;color:#000;transform:scaleY(1.09);transform-origin:0 78%;">General</span>
<div style="position:absolute;box-sizing:border-box;left:361px;top:194px;width:43px;height:19px;background:#f0f0f0;border:1px solid #d9d9d9;border-bottom:none"></div>
<span class="t" style="left:367.5px;top:196.5px;font-size:11px;line-height:15px;letter-spacing:-0.216px;color:#000;transform:scaleY(1.09);transform-origin:0 78%;">Object</span>
<div style="position:absolute;z-index:2;box-sizing:border-box;left:403px;top:192px;width:54px;height:21px;background:#fff;border:1px solid #d9d9d9;border-bottom:none"></div>
<span class="t" style="left:411px;top:194.5px;font-size:11px;line-height:15px;letter-spacing:-0.281px;color:#000;transform:scaleY(1.09);transform-origin:0 78%;z-index:3;">Security</span>
<div style="position:absolute;box-sizing:border-box;left:456px;top:194px;width:78px;height:19px;background:#f0f0f0;border:1px solid #d9d9d9;border-bottom:none"></div>
<span class="t" style="left:461.5px;top:196.5px;font-size:11px;line-height:15px;letter-spacing:-0.298px;color:#000;transform:scaleY(1.09);transform-origin:0 78%;">Attribute Editor</span>
<span class="t" style="left:326px;top:221.5px;font-size:11px;line-height:15px;letter-spacing:-0.325px;color:#000;transform:scaleY(1.09);transform-origin:0 78%;">Group or user names:</span>
<div style="position:absolute;box-sizing:border-box;left:326px;top:238px;width:356px;height:103px;background:#fff;border:1px solid #828790"></div>
<svg style="left:332px;top:241px" width="16" height="15" viewBox="0 0 16 15"><path d="M0 12.6 Q-0.2 8 3 7.2 L7 7 Q7.8 9 7.3 12.4 Q3.5 13.4 0 12.6 Z" fill="#86b05a"/><ellipse cx="3.9" cy="3.7" rx="3.1" ry="3.7" fill="#cdb56e"/><ellipse cx="5.1" cy="4.9" rx="2.2" ry="2.9" fill="#e3bd9b"/><ellipse cx="2.5" cy="6.6" rx="1" ry="0.9" fill="#4a3a22"/><path d="M6.7 13 Q6.6 8.2 9.5 7.6 L13.2 7.6 Q16 8.6 15.9 13.6 Q11 14.6 6.7 13 Z" fill="#7ea6d3"/><ellipse cx="10.6" cy="5" rx="2.5" ry="3.2" fill="#b5784a"/><path d="M9.3 8.4 L10.3 10.6 L11.3 8.4 Z" fill="#e8f0f8"/><path d="M8 4.2 Q8 0.6 11 0.6 Q14.4 0.6 14.1 4.6 Q13.6 5.8 13.1 6.2 Q13.2 3.4 11 3.2 Q9 3 8 4.2Z" fill="#484848"/></svg>
<span class="t" style="left:350px;top:241.5px;font-size:11px;line-height:15px;letter-spacing:-0.265px;color:#000;transform:scaleY(1.09);transform-origin:0 78%;">Enterprise Key Admins (MG\Enterprise Key Admins)</span>
<svg style="left:332px;top:258px" width="16" height="15" viewBox="0 0 16 15"><path d="M0 12.6 Q-0.2 8 3 7.2 L7 7 Q7.8 9 7.3 12.4 Q3.5 13.4 0 12.6 Z" fill="#86b05a"/><ellipse cx="3.9" cy="3.7" rx="3.1" ry="3.7" fill="#cdb56e"/><ellipse cx="5.1" cy="4.9" rx="2.2" ry="2.9" fill="#e3bd9b"/><ellipse cx="2.5" cy="6.6" rx="1" ry="0.9" fill="#4a3a22"/><path d="M6.7 13 Q6.6 8.2 9.5 7.6 L13.2 7.6 Q16 8.6 15.9 13.6 Q11 14.6 6.7 13 Z" fill="#7ea6d3"/><ellipse cx="10.6" cy="5" rx="2.5" ry="3.2" fill="#b5784a"/><path d="M9.3 8.4 L10.3 10.6 L11.3 8.4 Z" fill="#e8f0f8"/><path d="M8 4.2 Q8 0.6 11 0.6 Q14.4 0.6 14.1 4.6 Q13.6 5.8 13.1 6.2 Q13.2 3.4 11 3.2 Q9 3 8 4.2Z" fill="#484848"/></svg>
<span class="t" style="left:350px;top:258.5px;font-size:11px;line-height:15px;letter-spacing:-0.317px;color:#000;transform:scaleY(1.09);transform-origin:0 78%;">Administrators (MG\Administrators)</span>
<svg style="left:332px;top:275px" width="16" height="15" viewBox="0 0 16 15"><path d="M0 12.6 Q-0.2 8 3 7.2 L7 7 Q7.8 9 7.3 12.4 Q3.5 13.4 0 12.6 Z" fill="#86b05a"/><ellipse cx="3.9" cy="3.7" rx="3.1" ry="3.7" fill="#cdb56e"/><ellipse cx="5.1" cy="4.9" rx="2.2" ry="2.9" fill="#e3bd9b"/><ellipse cx="2.5" cy="6.6" rx="1" ry="0.9" fill="#4a3a22"/><path d="M6.7 13 Q6.6 8.2 9.5 7.6 L13.2 7.6 Q16 8.6 15.9 13.6 Q11 14.6 6.7 13 Z" fill="#7ea6d3"/><ellipse cx="10.6" cy="5" rx="2.5" ry="3.2" fill="#b5784a"/><path d="M9.3 8.4 L10.3 10.6 L11.3 8.4 Z" fill="#e8f0f8"/><path d="M8 4.2 Q8 0.6 11 0.6 Q14.4 0.6 14.1 4.6 Q13.6 5.8 13.1 6.2 Q13.2 3.4 11 3.2 Q9 3 8 4.2Z" fill="#484848"/></svg>
<span class="t" style="left:350px;top:275.5px;font-size:11px;line-height:15px;letter-spacing:-0.166px;color:#000;transform:scaleY(1.09);transform-origin:0 78%;">Pre-Windows 2000 Compatible Access (MG\Pre-Windows 2000...</span>
<svg style="left:332px;top:292px" width="16" height="15" viewBox="0 0 16 15"><path d="M0 12.6 Q-0.2 8 3 7.2 L7 7 Q7.8 9 7.3 12.4 Q3.5 13.4 0 12.6 Z" fill="#86b05a"/><ellipse cx="3.9" cy="3.7" rx="3.1" ry="3.7" fill="#cdb56e"/><ellipse cx="5.1" cy="4.9" rx="2.2" ry="2.9" fill="#e3bd9b"/><ellipse cx="2.5" cy="6.6" rx="1" ry="0.9" fill="#4a3a22"/><path d="M6.7 13 Q6.6 8.2 9.5 7.6 L13.2 7.6 Q16 8.6 15.9 13.6 Q11 14.6 6.7 13 Z" fill="#7ea6d3"/><ellipse cx="10.6" cy="5" rx="2.5" ry="3.2" fill="#b5784a"/><path d="M9.3 8.4 L10.3 10.6 L11.3 8.4 Z" fill="#e8f0f8"/><path d="M8 4.2 Q8 0.6 11 0.6 Q14.4 0.6 14.1 4.6 Q13.6 5.8 13.1 6.2 Q13.2 3.4 11 3.2 Q9 3 8 4.2Z" fill="#484848"/></svg>
<span class="t" style="left:350px;top:292.5px;font-size:11px;line-height:15px;letter-spacing:-0.187px;color:#000;transform:scaleY(1.09);transform-origin:0 78%;">ENTERPRISE DOMAIN CONTROLLERS</span>
<div style="position:absolute;left:348px;top:308px;width:315px;height:17px;background:#ededed"></div>
<svg style="left:332px;top:309px" width="16" height="15" viewBox="0 0 16 15"><rect x="0.5" y="0.5" width="15" height="9.4" fill="url(#gM)" stroke="#1a78c8"/><rect x="6.8" y="10" width="2.4" height="1.2" fill="#4b92cc"/><rect x="4.2" y="11" width="7.6" height="0.9" fill="#4b92cc"/><path d="M0.3 14.7 Q8 12.6 15.7 14.7 Z" fill="#5a9bd2"/></svg>
<span class="t" style="left:350px;top:309.5px;font-size:11px;line-height:15px;letter-spacing:-0.183px;color:#000;transform:scaleY(1.09);transform-origin:0 78%;">MECM01 (MG\MECM01$)</span>
<div style="position:absolute;left:664px;top:239px;width:16px;height:101px;background:#f0f0f0"></div>
<div style="position:absolute;left:664px;top:295px;width:15px;height:27px;background:#cdcdcd"></div>
<svg style="left:667.3px;top:245px" width="9" height="7"><path d="M0.8 5.4 L4.5 1.6 L8.2 5.4" fill="none" stroke="#404040" stroke-width="1.7"/></svg>
<svg style="left:667.3px;top:328px" width="9" height="7"><path d="M0.8 1.4 L4.5 5.2 L8.2 1.4" fill="none" stroke="#404040" stroke-width="1.7"/></svg>
<div class="btn" style="left:526px;top:348px;width:73px;height:21px;"></div>
<span class="t" style="left:548.5px;top:351.5px;font-size:11px;line-height:15px;letter-spacing:-0.125px;color:#000;transform:scaleY(1.09);transform-origin:0 78%;">Add...</span>
<div class="btn" style="left:607px;top:348px;width:73px;height:21px;"></div>
<span class="t" style="left:623.5px;top:351.5px;font-size:11px;line-height:15px;letter-spacing:-0.328px;color:#000;transform:scaleY(1.09);transform-origin:0 78%;">Remove</span>
<span class="t" style="left:326px;top:382.5px;font-size:11px;line-height:15px;letter-spacing:-0.396px;color:#000;transform:scaleY(1.09);transform-origin:0 78%;">Permissions for MECM01</span>
<span class="t" style="left:571px;top:382.5px;font-size:11px;line-height:15px;letter-spacing:-0.519px;color:#000;transform:scaleY(1.09);transform-origin:0 78%;">Allow</span>
<span class="t" style="left:632.5px;top:382.5px;font-size:11px;line-height:15px;letter-spacing:-0.422px;color:#000;transform:scaleY(1.09);transform-origin:0 78%;">Deny</span>
<div style="position:absolute;box-sizing:border-box;left:326px;top:399px;width:356px;height:99px;background:#fff;border:1px solid #828790"></div>
<span class="t" style="left:338px;top:404.5px;font-size:11px;line-height:15px;letter-spacing:-0.275px;color:#000;transform:scaleY(1.09);transform-origin:0 78%;">Full control</span>
<div class="cb" style="left:573px;top:405px"><svg style="left:1px;top:1px" width="11" height="11"><path d="M0.8 5.2 L4.2 8.5 L10.6 1.6" fill="none" stroke="#3d3d3d" stroke-width="1.3"/></svg></div>
<div class="cb" style="left:633px;top:405px"></div>
<span class="t" style="left:338px;top:422.5px;font-size:11px;line-height:15px;letter-spacing:-0.324px;color:#000;transform:scaleY(1.09);transform-origin:0 78%;">Read</span>
<div class="cb" style="left:573px;top:423px"><svg style="left:1px;top:1px" width="11" height="11"><path d="M0.8 5.2 L4.2 8.5 L10.6 1.6" fill="none" stroke="#3d3d3d" stroke-width="1.3"/></svg></div>
<div class="cb" style="left:633px;top:423px"></div>
<span class="t" style="left:338px;top:440.5px;font-size:11px;line-height:15px;letter-spacing:-0.194px;color:#000;transform:scaleY(1.09);transform-origin:0 78%;">Write</span>
<div class="cb" style="left:573px;top:441px"><svg style="left:1px;top:1px" width="11" height="11"><path d="M0.8 5.2 L4.2 8.5 L10.6 1.6" fill="none" stroke="#3d3d3d" stroke-width="1.3"/></svg></div>
<div class="cb" style="left:633px;top:441px"></div>
<span class="t" style="left:338px;top:458.5px;font-size:11px;line-height:15px;letter-spacing:-0.215px;color:#000;transform:scaleY(1.09);transform-origin:0 78%;">Create all child objects</span>
<div class="cb" style="left:573px;top:459px"><svg style="left:1px;top:1px" width="11" height="11"><path d="M0.8 5.2 L4.2 8.5 L10.6 1.6" fill="none" stroke="#3d3d3d" stroke-width="1.3"/></svg></div>
<div class="cb" style="left:633px;top:459px"></div>
<span class="t" style="left:338px;top:476.5px;font-size:11px;line-height:15px;letter-spacing:-0.165px;color:#000;transform:scaleY(1.09);transform-origin:0 78%;">Delete all child objects</span>
<div class="cb" style="left:573px;top:477px"><svg style="left:1px;top:1px" width="11" height="11"><path d="M0.8 5.2 L4.2 8.5 L10.6 1.6" fill="none" stroke="#3d3d3d" stroke-width="1.3"/></svg></div>
<div class="cb" style="left:633px;top:477px"></div>
<div style="position:absolute;box-sizing:border-box;left:571px;top:403px;width:17px;height:17px;border:1px dotted #000"></div>
<div style="position:absolute;left:573px;top:495px;width:13px;height:2px;box-sizing:border-box;border:1px solid #c4c4c4;border-bottom:none"></div>
<div style="position:absolute;left:633px;top:495px;width:13px;height:2px;box-sizing:border-box;border:1px solid #c4c4c4;border-bottom:none"></div>
<div style="position:absolute;left:665px;top:400px;width:16px;height:97px;background:#f0f0f0"></div>
<div style="position:absolute;left:665px;top:417px;width:15px;height:54px;background:#cdcdcd"></div>
<svg style="left:668.3px;top:406px" width="9" height="7"><path d="M0.8 5.4 L4.5 1.6 L8.2 5.4" fill="none" stroke="#404040" stroke-width="1.7"/></svg>
<svg style="left:668.3px;top:485px" width="9" height="7"><path d="M0.8 1.4 L4.5 5.2 L8.2 1.4" fill="none" stroke="#404040" stroke-width="1.7"/></svg>
<span class="t" style="left:326px;top:504.5px;font-size:11px;line-height:15px;letter-spacing:-0.218px;color:#000;transform:scaleY(1.09);transform-origin:0 78%;">For special permissions or advanced settings, click</span>
<span class="t" style="left:326px;top:517.5px;font-size:11px;line-height:15px;letter-spacing:-0.109px;color:#000;transform:scaleY(1.09);transform-origin:0 78%;">Advanced.</span>
<div class="btn" style="left:592px;top:506px;width:88px;height:21px;"></div>
<span class="t" style="left:611.5px;top:509.5px;font-size:11px;line-height:15px;letter-spacing:-0.117px;color:#000;transform:scaleY(1.09);transform-origin:0 78%;">Advanced</span>
<div class="btn" style="left:380px;top:579px;width:73px;height:21px;border:2px solid #0078d7;"></div>
<span class="t" style="left:408.5px;top:582.5px;font-size:11px;line-height:15px;letter-spacing:-0.203px;color:#000;transform:scaleY(1.09);transform-origin:0 78%;">OK</span>
<div class="btn" style="left:461px;top:579px;width:73px;height:21px;"></div>
<span class="t" style="left:480px;top:582.5px;font-size:11px;line-height:15px;letter-spacing:-0.042px;color:#000;transform:scaleY(1.09);transform-origin:0 78%;">Cancel</span>
<div class="btn" style="left:542px;top:579px;width:73px;height:21px;"></div>
<span class="t" style="left:565px;top:582.5px;font-size:11px;line-height:15px;letter-spacing:-0.306px;color:#000;transform:scaleY(1.09);transform-origin:0 78%;">Apply</span>
<div class="btn" style="left:623px;top:579px;width:73px;height:21px;background:#cccccc;border-color:#bfbfbf;"></div>
<span class="t" style="left:648px;top:582.5px;font-size:11px;line-height:15px;letter-spacing:-0.406px;color:#838383;transform:scaleY(1.09);transform-origin:0 78%;">Help</span>
<div style="position:absolute;left:0;top:0;width:1083px;height:5px;background:#00a2e8"></div>
<div style="position:absolute;left:0;top:0;width:3px;height:859px;background:#00a2e8"></div>
<div style="position:absolute;left:1079px;top:0;width:4px;height:859px;background:#00a2e8"></div>
<div style="position:absolute;left:0;top:854px;width:1083px;height:5px;background:#00a2e8"></div>
</div>
</body></html>
